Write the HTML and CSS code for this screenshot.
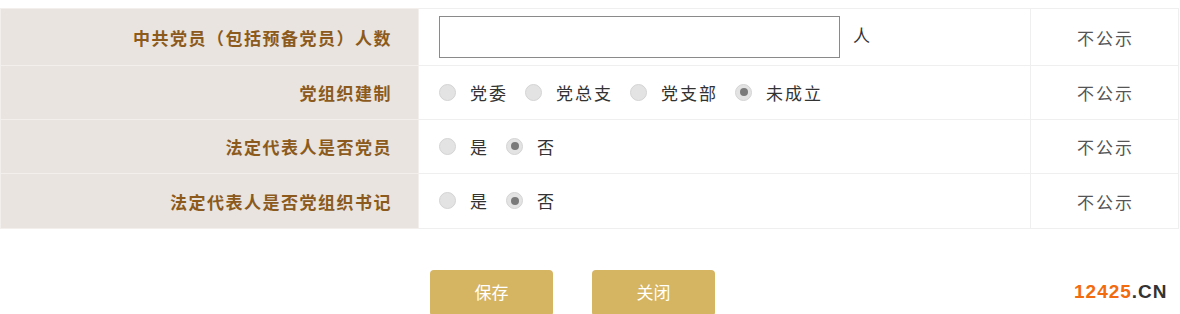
FILE: index.html
```html
<!DOCTYPE html>
<html lang="zh">
<head>
<meta charset="utf-8">
<link rel="stylesheet" href="styles.css">
</head>
<body>
<div class="page">
  <table class="form">
    <colgroup>
      <col class="c1"><col class="c2"><col class="c3">
    </colgroup>
    <tr class="r1">
      <th>中共党员（包括预备党员）人数</th>
      <td><div class="inwrap"><input class="num" type="text"><span class="unit">人</span></div></td>
      <td class="pub">不公示</td>
    </tr>
    <tr>
      <th>党组织建制</th>
      <td>
        <div class="radios">
          <span class="radio"></span><span class="rl">党委</span>
          <span class="radio"></span><span class="rl">党总支</span>
          <span class="radio"></span><span class="rl">党支部</span>
          <span class="radio on"></span><span class="rl">未成立</span>
        </div>
      </td>
      <td class="pub">不公示</td>
    </tr>
    <tr>
      <th>法定代表人是否党员</th>
      <td>
        <div class="radios">
          <span class="radio"></span><span class="rl">是</span>
          <span class="radio on"></span><span class="rl">否</span>
        </div>
      </td>
      <td class="pub">不公示</td>
    </tr>
    <tr class="r4">
      <th>法定代表人是否党组织书记</th>
      <td>
        <div class="radios">
          <span class="radio"></span><span class="rl">是</span>
          <span class="radio on"></span><span class="rl">否</span>
        </div>
      </td>
      <td class="pub">不公示</td>
    </tr>
  </table>
  <div class="actions">
    <button class="btn">保存</button>
    <button class="btn">关闭</button>
    <div class="mark"><span class="num-o">12425</span><span class="cn">.CN</span></div>
  </div>
</div>
</body>
</html>
```
FILE: styles.css
```css
html, body {
  margin: 0;
  padding: 0;
  background: #fff;
}
body {
  font-family: "Noto Sans CJK SC", "Liberation Sans", sans-serif;
  font-size: 17px;
}
.page {
  width: 1180px;
  height: 314px;
  padding-top: 8px;
  box-sizing: border-box;
  overflow: hidden;
}
.form {
  border-collapse: collapse;
  width: 1178px;
  table-layout: fixed;
}
.c1 { width: 418px; }
.c2 { width: 612px; }
.c3 { width: 148px; }
.form tr { height: 54px; }
.form tr.r1 { height: 57px; }
.form tr.r4 { height: 55px; }
.form th, .form td {
  border: 1px solid #efefef;
  padding: 0;
  box-sizing: border-box;
}
.form th {
  background: #e9e4df;
  color: #8b5a1c;
  font-weight: 700;
  text-align: right;
  padding-right: 26px;
  letter-spacing: 1.5px;
  border-color: #f2efec;
}
.form td {
  color: #333;
  letter-spacing: 2px;
}
.form td.pub {
  text-align: center;
  color: #555;
  padding-left: 2px;
}
.inwrap {
  display: flex;
  align-items: center;
  padding-left: 20px;
}
.num {
  width: 401px;
  height: 42px;
  box-sizing: border-box;
  border: 1px solid #8a8a8a;
  outline: none;
  margin: 0;
  padding: 0 8px;
  background: #fff;
}
.unit {
  margin-left: 13px;
  margin-top: -5px;
  color: #333;
}
.radios {
  display: flex;
  align-items: center;
  padding-left: 20px;
  padding-bottom: 1px;
}
.radio {
  width: 17px;
  height: 17px;
  border-radius: 50%;
  box-sizing: border-box;
  background: #e3e3e3;
  border: 1px solid #d4d4d4;
  display: flex;
  align-items: center;
  justify-content: center;
  margin-right: 14px;
  flex: none;
}
.radio.on::after {
  content: "";
  width: 8px;
  height: 8px;
  border-radius: 50%;
  background: #7a7a7a;
}
.rl {
  margin-right: 17px;
}
.actions {
  position: relative;
  display: flex;
  gap: 39px;
  padding-left: 430px;
  margin-top: 41px;
}
.btn {
  width: 123px;
  height: 46px;
  background: #d5b462;
  border: none;
  border-radius: 4px;
  color: #fff;
  font-family: "Noto Sans CJK SC", sans-serif;
  font-size: 17px;
  padding: 0 0 3px 0;
}
.mark {
  position: absolute;
  left: 1074px;
  top: 11px;
  font-family: "Liberation Sans", Arial, sans-serif;
  font-weight: 700;
  font-size: 19px;
  letter-spacing: 1px;
}
.num-o { color: #f26b0f; }
.cn { color: #333; }
```
